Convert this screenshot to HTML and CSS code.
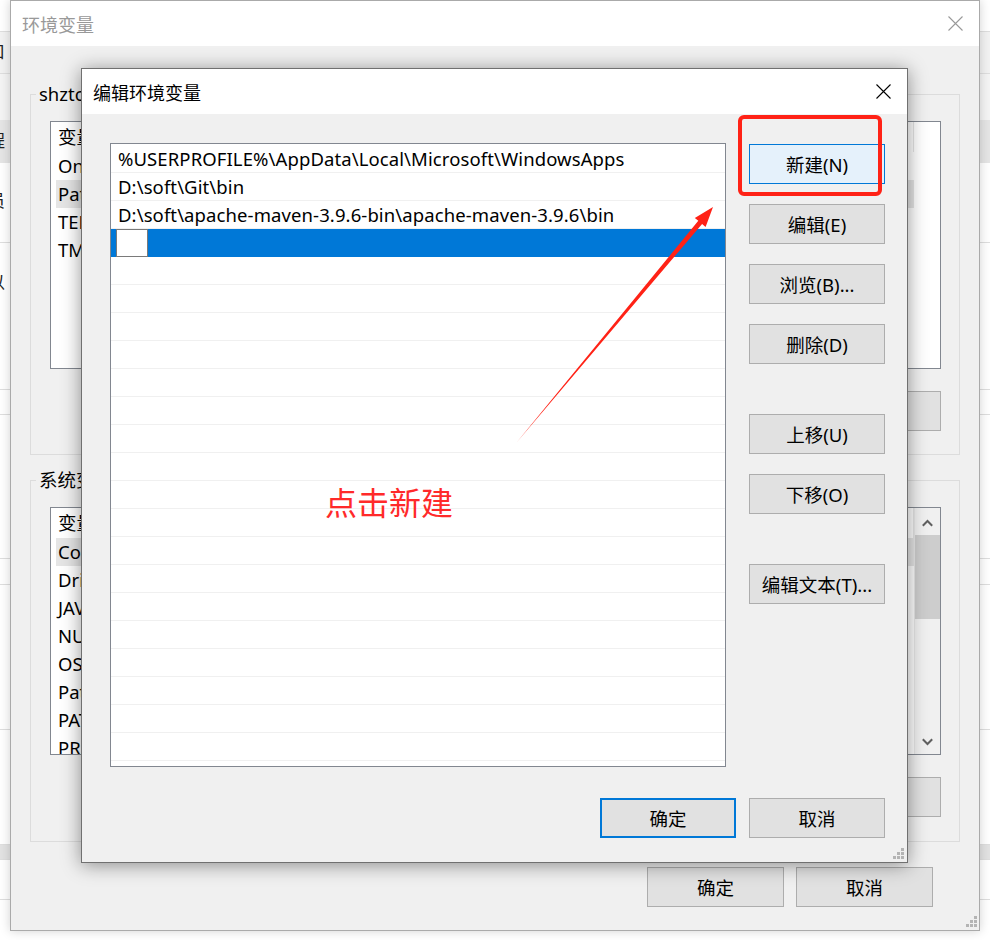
FILE: index.html
```html
<!DOCTYPE html>
<html lang="zh-CN">
<head>
    <meta charset="UTF-8">
    <title>编辑环境变量</title>
    <link rel="stylesheet" href="styles.css">
</head>
<body>
<div class="desktop">

    <!-- window left behind everything -->
    <div class="back-win">
        <div class="bw-row bw-top"></div>
        <div class="bw-row bw-band"><span>窗口</span></div>
        <div class="bw-row bw-light"></div>
        <div class="bw-row bw-sel"><span>应用程</span></div>
        <div class="bw-row bw-r5"><span>管理员</span></div>
        <div class="bw-row bw-r6"><span>可以</span></div>
        <div class="bw-row bw-r7"></div>
        <div class="bw-row bw-r8"></div>
        <div class="bw-row bw-r9"></div>
        <div class="bw-row bw-r10"></div>
        <div class="bw-row bw-r11"></div>
        <div class="bw-row bw-r12"></div>
        <div class="bw-row bw-r13"></div>
    </div>

    <section class="win env-win">
        <div class="titlebar inactive">
            <span class="title">环境变量</span>
            <svg class="close" width="15" height="15" viewBox="0 0 15 15"><path d="M0.5 0.5L14.5 14.5M14.5 0.5L0.5 14.5"/></svg>
        </div>
        <div class="env-body">
            <div class="group">
                <div class="group-title">shztc 的用户变量(U)</div>
                <div class="var-list">
                    <div class="var-rows no-scroll">
                        <div class="var-head"><span class="col-name">变量</span><span class="col-val">值</span></div>
                        <div class="var-row"><span class="col-name">OneDrive</span><span class="col-val">C:\Users\shztc\OneDrive</span></div>
                        <div class="var-row sel"><span class="col-name">Path</span><span class="col-val">C:\Users\shztc\AppData\Local\Microsoft\WindowsApps</span></div>
                        <div class="var-row"><span class="col-name">TEMP</span><span class="col-val">%USERPROFILE%\AppData\Local\Temp</span></div>
                        <div class="var-row"><span class="col-name">TMP</span><span class="col-val">%USERPROFILE%\AppData\Local\Temp</span></div>
                    </div>
                </div>
                <div class="btn-row">
                    <button class="btn">新建(N)...</button>
                    <button class="btn">编辑(E)...</button>
                    <button class="btn">删除(D)</button>
                </div>
            </div>

            <div class="group sys-group">
                <div class="group-title">系统变量(S)</div>
                <div class="var-list">
                    <div class="var-rows">
                        <div class="var-head"><span class="col-name">变量</span><span class="col-val">值</span></div>
                        <div class="var-row sel"><span class="col-name">ComSpec</span><span class="col-val">C:\Windows\system32\cmd.exe</span></div>
                        <div class="var-row"><span class="col-name">DriverData</span><span class="col-val">C:\Windows\System32\Drivers\DriverData</span></div>
                        <div class="var-row"><span class="col-name">JAVA_HOME</span><span class="col-val">D:\soft\jdk</span></div>
                        <div class="var-row"><span class="col-name">NUMBER_OF_PROCESSORS</span><span class="col-val">8</span></div>
                        <div class="var-row"><span class="col-name">OS</span><span class="col-val">Windows_NT</span></div>
                        <div class="var-row"><span class="col-name">Path</span><span class="col-val">C:\Windows\system32;C:\Windows</span></div>
                        <div class="var-row"><span class="col-name">PATHEXT</span><span class="col-val">.COM;.EXE;.BAT;.CMD</span></div>
                        <div class="var-row"><span class="col-name">PROCESSOR_ARCHITECTURE</span><span class="col-val">AMD64</span></div>
                    </div>
                    <div class="vscroll">
                        <svg class="sb-arrow" width="11" height="8" viewBox="0 0 11 8"><path d="M0.8 6.8L5.5 2L10.2 6.8"/></svg>
                        <div class="sb-track"><div class="sb-thumb"></div></div>
                        <svg class="sb-arrow" width="11" height="8" viewBox="0 0 11 8"><path d="M0.8 1.2L5.5 6L10.2 1.2"/></svg>
                    </div>
                </div>
                <div class="btn-row">
                    <button class="btn">新建(W)...</button>
                    <button class="btn">编辑(I)...</button>
                    <button class="btn">删除(L)</button>
                </div>
            </div>

            <div class="btn-row env-footer">
                <button class="btn wide">确定</button>
                <button class="btn wide">取消</button>
            </div>
        </div>
        <svg class="grip env-grip" width="12" height="12" viewBox="0 0 12 12"><path d="M9 0h3v3H9zM5 4h3v3H5zM9 4h3v3H9zM1 8h3v3H1zM5 8h3v3H5zM9 8h3v3H9z"/></svg>
    </section>

    <section class="win edit-win">
        <div class="titlebar">
            <span class="title">编辑环境变量</span>
            <svg class="close" width="15" height="15" viewBox="0 0 15 15"><path d="M0.5 0.5L14.5 14.5M14.5 0.5L0.5 14.5"/></svg>
        </div>
        <div class="edit-body">
            <div class="edit-main">
                <div class="path-list">
                    <div class="path-row">%USERPROFILE%\AppData\Local\Microsoft\WindowsApps</div>
                    <div class="path-row">D:\soft\Git\bin</div>
                    <div class="path-row">D:\soft\apache-maven-3.9.6-bin\apache-maven-3.9.6\bin</div>
                    <div class="path-row sel"><span class="cell-edit"></span></div>
                    <div class="path-row"></div>
                    <div class="path-row"></div>
                    <div class="path-row"></div>
                    <div class="path-row"></div>
                    <div class="path-row"></div>
                    <div class="path-row"></div>
                    <div class="path-row"></div>
                    <div class="path-row"></div>
                    <div class="path-row"></div>
                    <div class="path-row"></div>
                    <div class="path-row"></div>
                    <div class="path-row"></div>
                    <div class="path-row"></div>
                    <div class="path-row"></div>
                    <div class="path-row"></div>
                    <div class="path-row"></div>
                    <div class="path-row"></div>
                    <div class="path-row"></div>
                    <div class="path-row"></div>
                </div>
                <div class="side-btns">
                    <button class="btn hot">新建(N)</button>
                    <button class="btn">编辑(E)</button>
                    <button class="btn">浏览(B)...</button>
                    <button class="btn">删除(D)</button>
                    <button class="btn spaced">上移(U)</button>
                    <button class="btn">下移(O)</button>
                    <button class="btn spaced">编辑文本(T)...</button>
                </div>
            </div>
            <div class="btn-row edit-footer">
                <button class="btn primary">确定</button>
                <button class="btn">取消</button>
            </div>
        </div>
        <svg class="grip edit-grip" width="12" height="12" viewBox="0 0 12 12"><path d="M9 0h3v3H9zM5 4h3v3H5zM9 4h3v3H9zM1 8h3v3H1zM5 8h3v3H5zM9 8h3v3H9z"/></svg>
    </section>

    <!-- screenshot annotation -->
    <div class="mark-box"></div>
    <svg class="mark-arrow" width="990" height="940" viewBox="0 0 990 940">
        <polygon points="713,207 705.6,226.9 702.1,224 517,442 698.3,220.8 694.8,217.9"/>
    </svg>
    <div class="mark-text">点击新建</div>

</div>
</body>
</html>
```

FILE: styles.css
```css
* {
    box-sizing: border-box;
}

html, body {
    margin: 0;
    padding: 0;
}

body {
    width: 990px;
    height: 940px;
    overflow: hidden;
    background-color: #fff;
    font-family: "Noto Sans", "Noto Sans CJK SC", sans-serif;
    font-size: 18.5px;
    color: #000;
}

.desktop {
    position: relative;
    width: 990px;
    height: 940px;
    overflow: hidden;
}

/* window peeking out on the left */
.back-win {
    position: absolute;
    left: -190px;
    top: 0;
    width: 1400px;
    height: 940px;
    background-color: #fff;
    display: flex;
    flex-direction: column;
}

.bw-row {
    flex: none;
    border-bottom: 1px solid #dedede;
}

.bw-row span {
    display: block;
    width: 195px;
    text-align: right;
    color: #222;
    font-size: 17px;
}

.bw-top { height: 32px; }
.bw-band { height: 42px; background-color: #f2f2f2; line-height: 40px; }
.bw-light { height: 46px; background-color: #f4f4f4; border-bottom: none; }
.bw-sel { height: 43px; background-color: #e5e5e5; line-height: 42px; border-bottom: none; }
.bw-r5 { height: 80px; padding-top: 24px; }
.bw-r6 { height: 147px; padding-top: 26px; }
.bw-r7 { height: 25px; }
.bw-r8 { height: 144px; }
.bw-r9 { height: 26px; }
.bw-r10 { height: 145px; }
.bw-r11 { height: 115px; }
.bw-r12 { height: 15px; background-color: #e2e2e2; }
.bw-r13 { height: 40px; }

/* windows */
.win {
    position: absolute;
    display: flex;
    flex-direction: column;
    background-color: #f0f0f0;
}

.env-win {
    left: 10px;
    top: 0;
    width: 970px;
    height: 931px;
    border: 1px solid #aaa;
    box-shadow: 0 0 10px rgba(0, 0, 0, 0.18);
}

.edit-win {
    left: 81px;
    top: 68px;
    width: 827px;
    height: 795px;
    border: 1px solid #707070;
    box-shadow: 0 2px 18px rgba(0, 0, 0, 0.42);
}

.titlebar {
    flex: none;
    height: 45px;
    background-color: #fff;
    display: flex;
    align-items: center;
    justify-content: space-between;
    padding: 0 16px 0 11px;
}

.title {
    font-size: 18px;
    color: #000;
}

.close path {
    stroke: #000;
    stroke-width: 1.1;
    fill: none;
}

.inactive .title {
    color: #999;
}

.inactive .close path {
    stroke: #999;
}

.grip {
    position: absolute;
}

.grip path {
    fill: #b4b4b4;
}

.env-grip {
    right: 2px;
    bottom: 2px;
}

.edit-grip {
    right: 3px;
    bottom: 2px;
}

/* buttons */
.btn {
    width: 136px;
    height: 40px;
    padding: 0;
    margin: 0;
    background-color: #e1e1e1;
    border: 1px solid #adadad;
    border-radius: 0;
    font-family: inherit;
    font-size: 18.5px;
    color: #000;
}

.btn.hot {
    background-color: #e5f1fb;
    border-color: #0078d7;
}

.btn.primary {
    border: 2px solid #0078d7;
}

.btn-row {
    display: flex;
    justify-content: flex-end;
    gap: 14px;
}

/* environment variables window */
.env-body {
    flex: 1;
    display: flex;
    flex-direction: column;
    padding: 48px 19px 0 19px;
}

.group {
    display: flex;
    flex-direction: column;
    border: 1px solid #dcdcdc;
    padding: 0 18px 23px 19px;
}

.sys-group {
    margin-top: 25px;
    padding-bottom: 24px;
}

.group-title {
    align-self: flex-start;
    margin: -12px 0 0 -14px;
    padding: 0 3px;
    line-height: 22px;
    background-color: #f0f0f0;
}

.group .btn-row {
    margin-top: 22px;
}

.var-list {
    margin-top: 16px;
    height: 248px;
    border: 1px solid #828790;
    background-color: #fff;
    display: flex;
    overflow: hidden;
}

.var-rows {
    flex: 1;
    min-width: 0;
}

.var-rows.no-scroll {
    margin-right: 26px;
}

.var-head {
    height: 30px;
    line-height: 29px;
    padding-left: 7px;
    white-space: nowrap;
    border-right: 1px solid #e5e5e5;
}

.var-row {
    height: 28px;
    line-height: 28px;
    margin-left: 5px;
    padding-left: 2px;
    white-space: nowrap;
    overflow: hidden;
}

.var-row.sel {
    background-color: #e5e5e5;
}

.col-name {
    display: inline-block;
    width: 250px;
}

.vscroll {
    flex: none;
    width: 26px;
    background-color: #f0f0f0;
    border-left: 1px solid #e8e8e8;
    display: flex;
    flex-direction: column;
    align-items: center;
}

.sb-arrow {
    flex: none;
    margin: 11px 0 8px;
}

.sb-arrow path {
    stroke: #606060;
    stroke-width: 2;
    fill: none;
}

.sb-track {
    flex: 1;
    align-self: stretch;
}

.sb-thumb {
    height: 84px;
    background-color: #cdcdcd;
}

.env-footer {
    margin-top: 25px;
    margin-right: 27px;
    gap: 12px;
}

.btn.wide {
    width: 137px;
}

/* edit environment variable dialog */
.edit-body {
    flex: 1;
    display: flex;
    flex-direction: column;
    padding: 29px 22px 0 28px;
}

.edit-main {
    display: flex;
    gap: 23px;
}

.path-list {
    width: 616px;
    height: 624px;
    border: 1px solid #828790;
    background-color: #fff;
    padding-top: 1px;
    overflow: hidden;
}

.path-row {
    height: 28px;
    line-height: 27px;
    padding-left: 7px;
    border-bottom: 1px solid #f0f0f0;
    white-space: nowrap;
    display: flex;
    align-items: center;
    letter-spacing: 0.1px;
}

.path-row.sel {
    background-color: #0078d7;
    border-bottom: none;
    padding-left: 5px;
}

.cell-edit {
    width: 32px;
    height: 28px;
    background-color: #fff;
    border: 1px solid #7a7a7a;
}

.side-btns {
    display: flex;
    flex-direction: column;
    gap: 20px;
    padding-top: 1px;
}

.side-btns .spaced {
    margin-top: 30px;
}

.edit-footer {
    margin-top: 31px;
    gap: 13px;
}

/* annotation drawn on top of the screenshot */
.mark-box {
    position: absolute;
    left: 738px;
    top: 115px;
    width: 144px;
    height: 81px;
    border: 4px solid #ff2216;
    border-radius: 6px;
}

.mark-arrow {
    position: absolute;
    left: 0;
    top: 0;
    pointer-events: none;
}

.mark-arrow polygon {
    fill: #ff2216;
}

.mark-text {
    position: absolute;
    left: 325px;
    top: 483px;
    font-family: "Noto Sans CJK SC", sans-serif;
    font-size: 32px;
    line-height: 36px;
    color: #ff2a2a;
}
```
